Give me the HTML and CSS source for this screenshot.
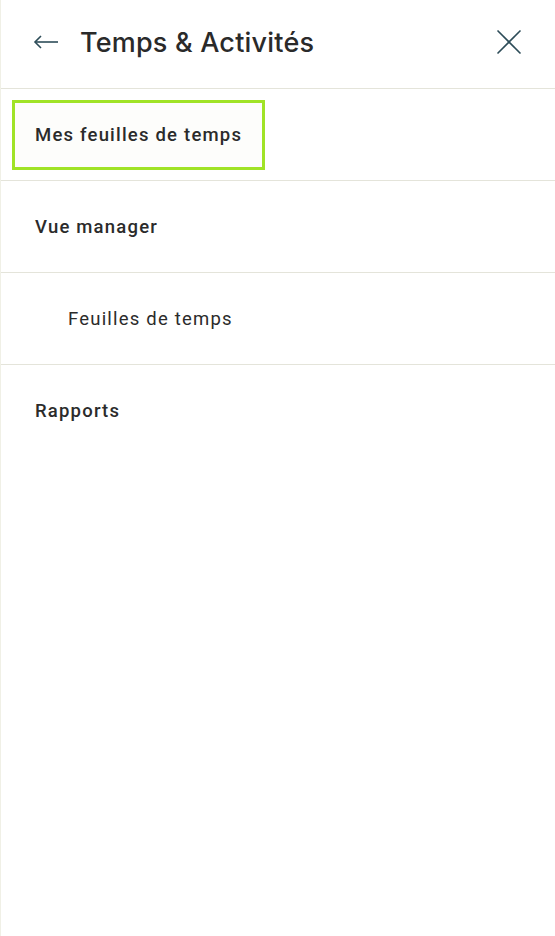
FILE: index.html
```html
<!DOCTYPE html>
<html lang="fr">
<head>
    <meta charset="UTF-8">
    <meta name="viewport" content="width=device-width, initial-scale=1.0">
    <title>Temps &amp; Activités</title>
    <link rel="stylesheet" href="styles.css">
</head>
<body>
    <div class="panel">
        <header class="panel-header">
            <button class="icon-btn" aria-label="Retour">
                <svg width="26" height="26" viewBox="0 0 26 26" fill="none" stroke="currentColor" stroke-width="1.6">
                    <path d="M2 13H25"/>
                    <path d="M8 7L2 13L8 19"/>
                </svg>
            </button>
            <h1 class="panel-title">Temps &amp; Activités</h1>
            <button class="icon-btn close-btn" aria-label="Fermer">
                <svg width="26" height="26" viewBox="0 0 26 26" fill="none" stroke="currentColor" stroke-width="1.6">
                    <path d="M1.5 1.5L24.5 24.5"/>
                    <path d="M24.5 1.5L1.5 24.5"/>
                </svg>
            </button>
        </header>

        <ul class="menu">
            <li class="menu-item"><a class="menu-link is-focused" href="#">Mes feuilles de temps</a></li>
            <li class="menu-item"><a class="menu-link" href="#">Vue manager</a></li>
            <li class="menu-item"><a class="menu-link sub" href="#">Feuilles de temps</a></li>
            <li class="menu-item last"><a class="menu-link" href="#">Rapports</a></li>
        </ul>
    </div>
</body>
</html>
```

FILE: styles.css
```css
/* Base */
body {
    margin: 0;
    background-color: #fff;
    font-family: Roboto, "Noto Sans", sans-serif;
    color: #2b2b2b;
}

.panel {
    min-height: 936px;
    box-sizing: border-box;
    border-left: 1px solid #f0f0e6;
}

/* En-tete */
.panel-header {
    display: flex;
    align-items: center;
    height: 84px;
    padding: 0 33px 4px 32px;
    border-bottom: 1px solid #e4e4da;
}

.icon-btn {
    display: flex;
    align-items: center;
    justify-content: center;
    padding: 0;
    border: none;
    background: transparent;
    color: #2d4c58;
    cursor: pointer;
}

.panel-title {
    flex: 1;
    margin: 0 0 0 21px;
    font-family: Inter, "Open Sans", sans-serif;
    font-size: 27px;
    font-weight: 500;
    letter-spacing: 0.2px;
    color: #2a2a2a;
}

/* Menu */
.menu {
    list-style: none;
    margin: 0;
    padding: 0;
}

.menu-item {
    display: flex;
    align-items: center;
    height: 91px;
    padding-left: 11px;
    border-bottom: 1px solid #e4e4da;
}

.menu-item.last {
    border-bottom: none;
}

.menu-link {
    display: inline-block;
    padding: 20px 20px;
    border: 3px solid transparent;
    font-size: 18.5px;
    font-weight: 500;
    line-height: 24px;
    letter-spacing: 1.2px;
    color: #2b2b2b;
    text-decoration: none;
}

.menu-link.sub {
    padding-left: 53px;
    font-weight: 400;
}

.menu-link.is-focused {
    border-color: #a0e326;
    background-color: #fdfdfb;
}
```
